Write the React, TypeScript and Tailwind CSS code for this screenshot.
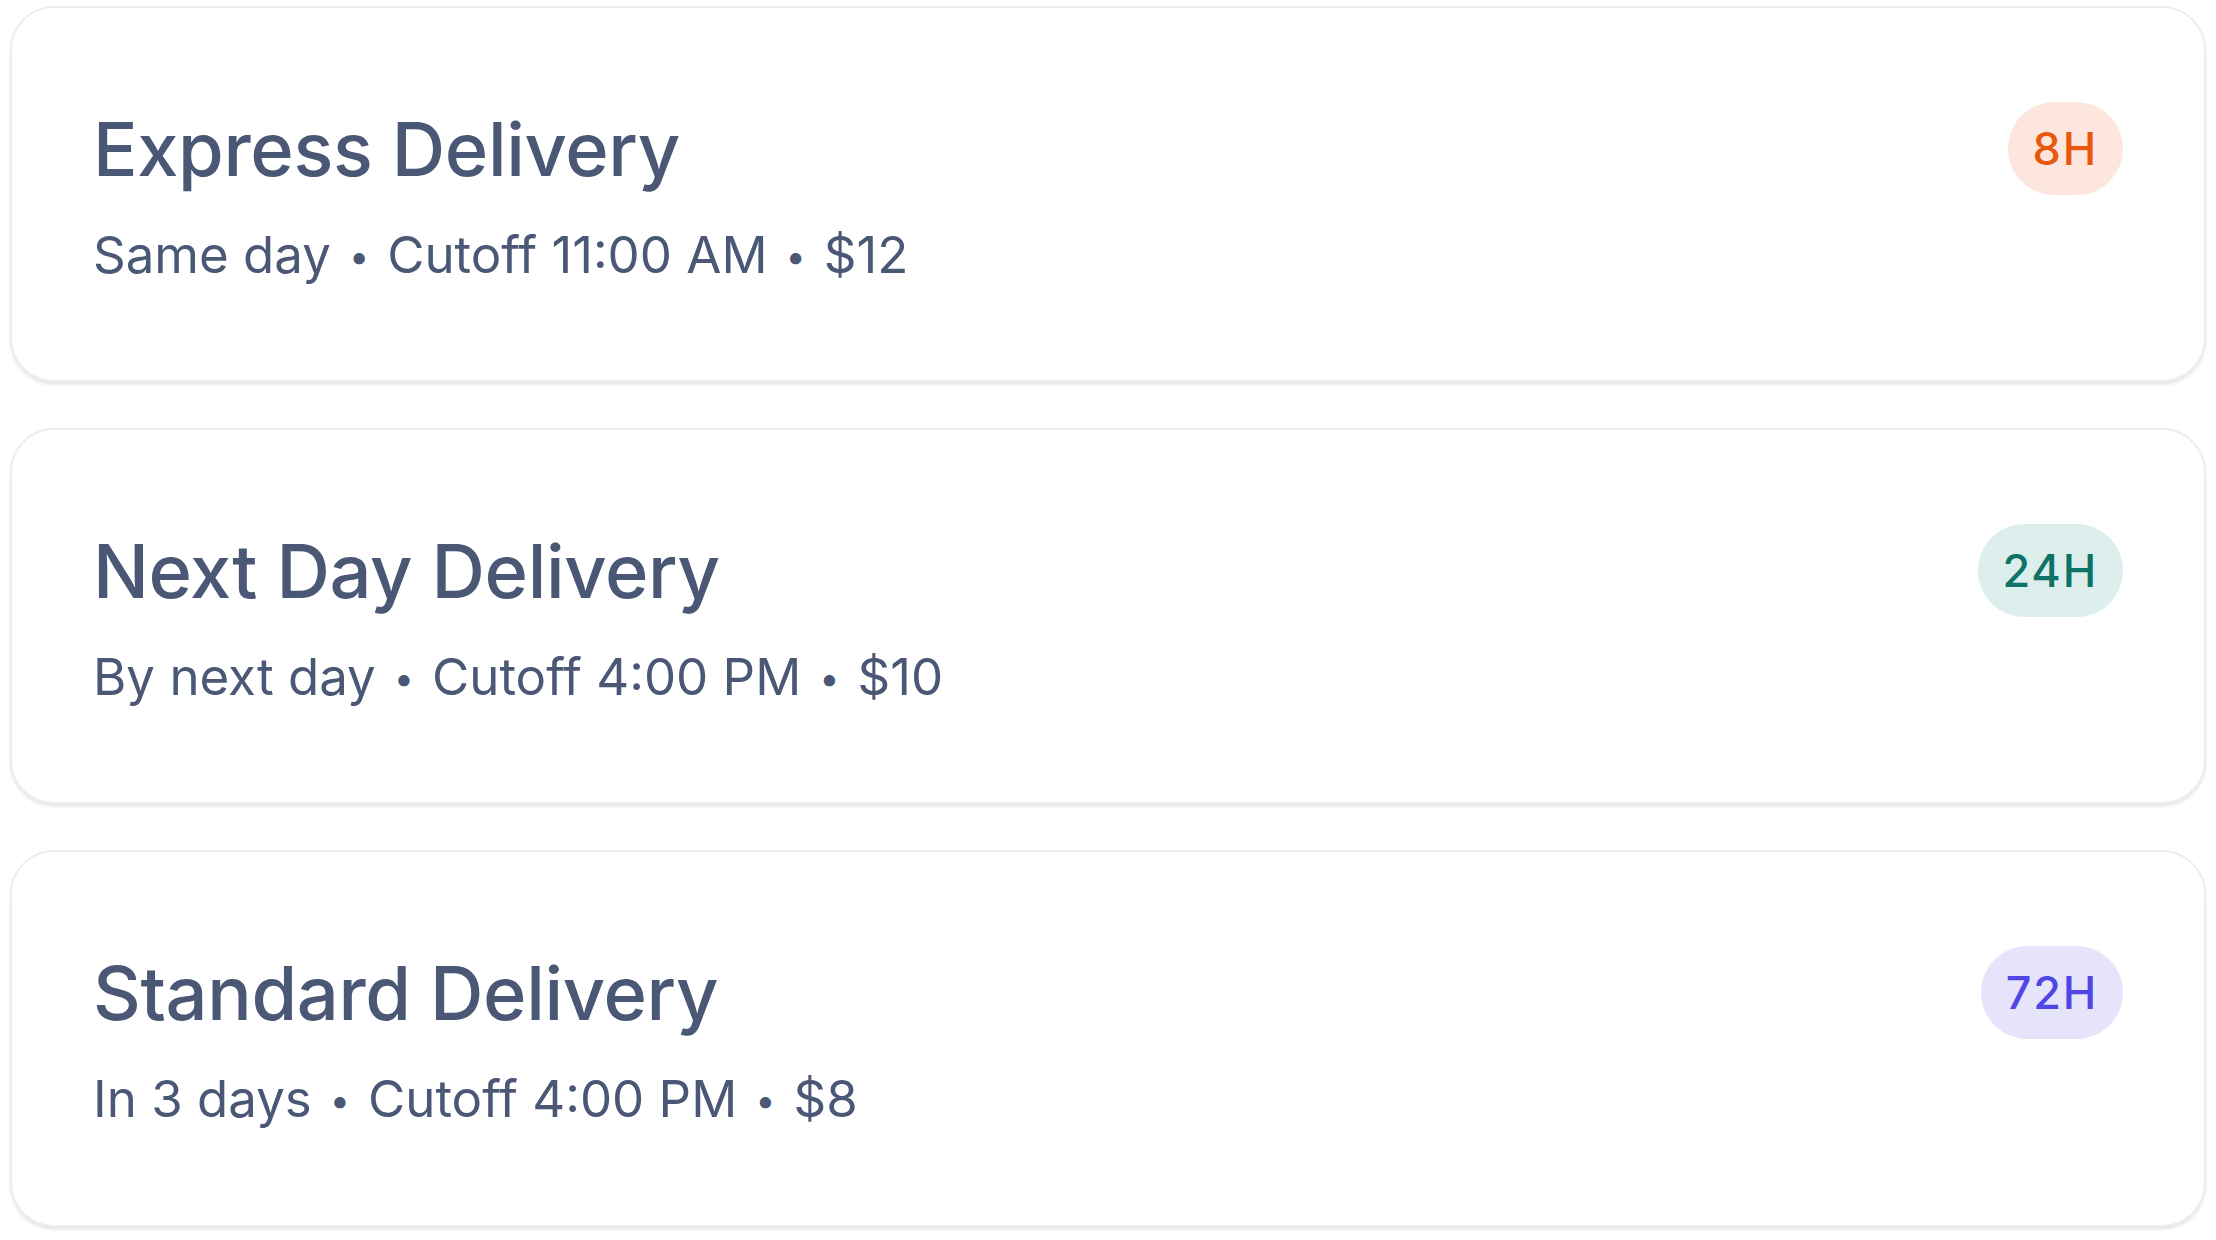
type Option = {
  title: string;
  eta: string;
  cutoff: string;
  price: string;
  badge: string;
  badgeClass: string;
};

const options: Option[] = [
  {
    title: 'Express Delivery',
    eta: 'Same day',
    cutoff: 'Cutoff 11:00 AM',
    price: '$12',
    badge: '8H',
    badgeClass: 'bg-[#fce6dd] text-[#e8580f]',
  },
  {
    title: 'Next Day Delivery',
    eta: 'By next day',
    cutoff: 'Cutoff 4:00 PM',
    price: '$10',
    badge: '24H',
    badgeClass: 'bg-[#dcefec] text-[#0f7266]',
  },
  {
    title: 'Standard Delivery',
    eta: 'In 3 days',
    cutoff: 'Cutoff 4:00 PM',
    price: '$8',
    badge: '72H',
    badgeClass: 'bg-[#e6e4fb] text-[#4f46e5]',
  },
];

function Dot() {
  return <span className="mx-[18px] align-[4px] text-[36px]">•</span>;
}

function DeliveryCard({ option }: { option: Option }) {
  return (
    <div className="rounded-[44px] border-2 border-[#ededed] bg-white px-[81px] pt-[94px] pb-[95px] shadow-[0_3px_3px_rgba(0,0,0,0.09)]">
      <div className="flex h-[93px] items-center justify-between">
        <h2 className="text-[74px] font-medium leading-none tracking-[-0.005em] text-[#4a5775]">{option.title}</h2>
        <span
          className={`flex h-[93px] items-center rounded-full px-[25px] text-[45px] font-medium leading-none tracking-[0.04em] ${option.badgeClass}`}
        >
          {option.badge}
        </span>
      </div>
      <p className="mt-[29px] text-[51px] leading-[1.2] text-[#4a5775]">
        {option.eta}
        <Dot />
        {option.cutoff}
        <Dot />
        {option.price}
      </p>
    </div>
  );
}

export default function App() {
  return (
    <div className="flex min-h-screen flex-col gap-[46px] bg-white px-[10px] pt-[6px] font-['Inter',sans-serif]">
      {options.map((o) => (
        <DeliveryCard key={o.title} option={o} />
      ))}
    </div>
  );
}
